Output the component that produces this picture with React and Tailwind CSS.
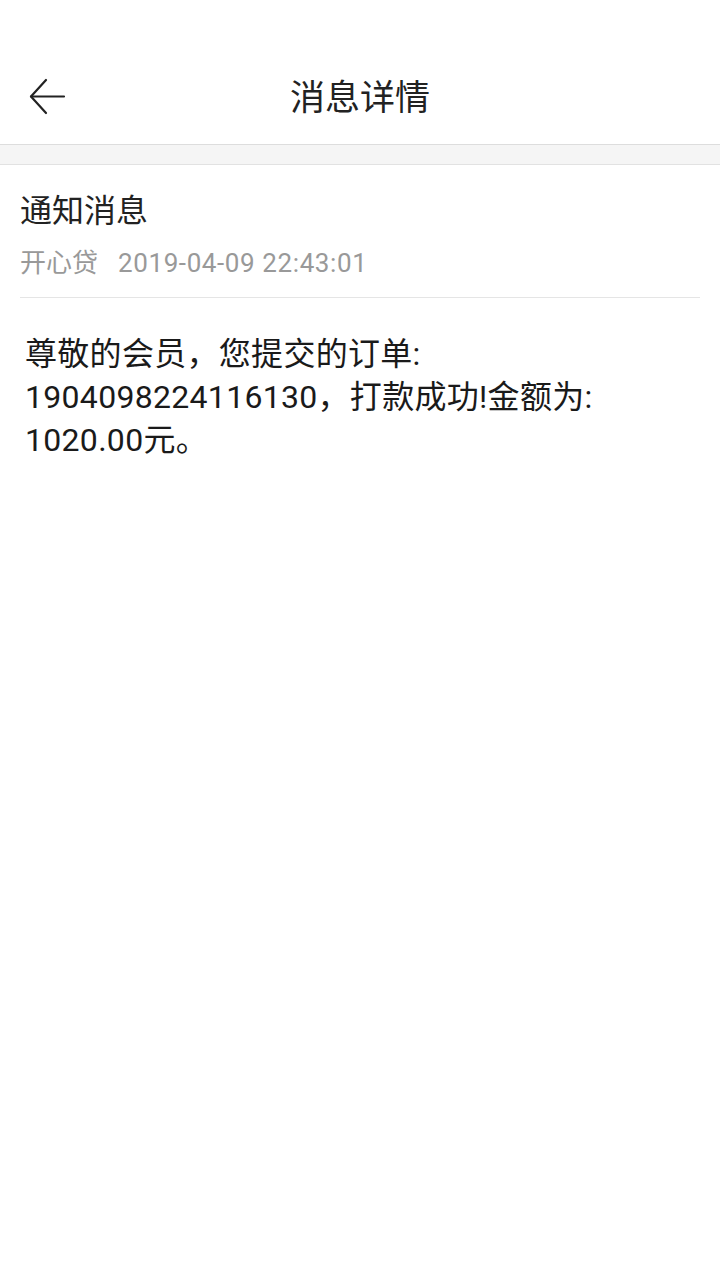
export default function App() {
  const font = { fontFamily: 'Roboto, "Noto Sans CJK SC", sans-serif' };
  return (
    <div className="w-[720px] h-[1280px] bg-white flex flex-col" style={font}>
      <div className="h-[48px]" />
      <div className="h-[97px] relative flex items-center justify-center border-b border-[#dddddd] pt-[6px]">
        <div className="absolute left-[28px] top-[29px]">
          <svg width="40" height="40" viewBox="0 0 40 40" fill="none" stroke="#222" strokeWidth="2.2" strokeLinecap="round" strokeLinejoin="round">
            <path d="M3 19.5 H36" />
            <path d="M18 3 L3 19.5 L18 36" />
          </svg>
        </div>
        <div className="text-[35px] text-[#222]">消息详情</div>
      </div>
      <div className="h-[20px] bg-[#f5f5f5] border-b border-[#e2e2e2]" />
      <div className="px-[20px]">
        <div className="pt-[25px] text-[32px] leading-[42px] text-[#222]">通知消息</div>
        <div className="mt-[14px] flex items-center text-[26px] leading-[34px] text-[#999999]">
          <span>开心贷</span>
          <span className="ml-[20px] tracking-[0.6px]">2019-04-09 22:43:01</span>
        </div>
        <div className="mt-[17px] border-t border-[#e5e5e5]" />
      </div>
      <div className="px-[25px] pt-[35px] text-[32px] leading-[43px] text-[#1a1a1a] tracking-[0.3px]">
        尊敬的会员，您提交的订单:<br />
        1904098224116130，打款成功!金额为:<br />
        1020.00元。
      </div>
    </div>
  );
}
